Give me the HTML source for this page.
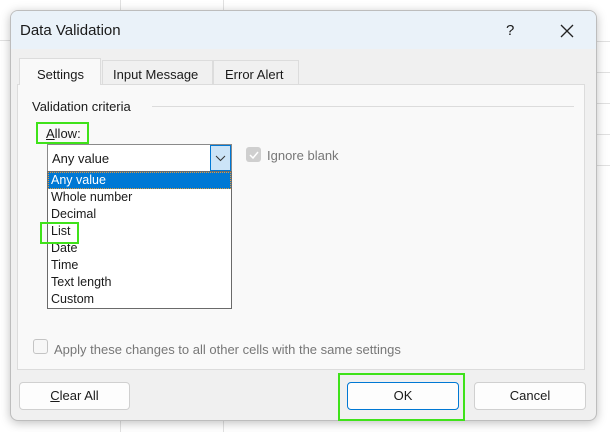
<!DOCTYPE html>
<html><head><style>
*{margin:0;padding:0;box-sizing:border-box}
body{width:610px;height:432px;overflow:hidden;background:#fff;font-family:"Liberation Sans",sans-serif;font-size:12.5px;color:#1a1a1a;position:relative}
.gl{position:absolute;background:#e1e1e1}
.a{position:absolute}
.dlg{position:absolute;left:10px;top:10px;width:587px;height:411px;background:#f0f0f0;border:1px solid #bdbdbd;border-radius:8px;box-shadow:0 2px 10px rgba(0,0,0,.25)}
.title{position:absolute;left:0;top:0;width:100%;height:38px;background:#eaf2f9;border-radius:7px 7px 0 0}
.btn{position:absolute;height:28px;background:#fdfdfd;border:1px solid #d0d0d0;border-radius:4px;text-align:center;line-height:26px;font-size:13px}
.li{position:absolute;left:3px;font-size:12.5px;line-height:17px}
</style></head><body>
<div class="gl" style="left:120px;top:0;width:1px;height:432px"></div>
<div class="gl" style="left:223px;top:0;width:1px;height:432px"></div>
<div class="gl" style="left:0;top:40px;width:10px;height:1px"></div>
<div class="gl" style="left:597px;top:41px;width:13px;height:1px"></div>
<div class="gl" style="left:597px;top:72px;width:13px;height:1px"></div>
<div class="gl" style="left:597px;top:103px;width:13px;height:1px"></div>
<div class="gl" style="left:597px;top:134px;width:13px;height:1px"></div>
<div class="gl" style="left:597px;top:165px;width:13px;height:1px"></div>
<div class="dlg">
 <div class="title"></div>
 <div class="a" style="left:9px;top:11px;font-size:15px">Data Validation</div>
 <div class="a" style="left:495px;top:11px;font-size:15px">?</div>
 <svg class="a" style="left:549px;top:13px" width="14" height="14"><path d="M1 1L13 13M13 1L1 13" stroke="#222" stroke-width="1.3"/></svg>
 <div class="a" style="left:6px;top:73px;width:568px;height:286px;background:#f9f9f9;border:1px solid #dcdcdc"></div>
 <div class="a" style="left:8px;top:47px;width:82px;height:27px;background:#f9f9f9;border:1px solid #dcdcdc;border-bottom:none;padding:8px 0 0 17px;font-size:13px">Settings</div>
 <div class="a" style="left:91px;top:49px;width:111px;height:24px;background:#f0f0f0;border:1px solid #dcdcdc;border-bottom:none;padding:6px 0 0 10px;font-size:13px">Input Message</div>
 <div class="a" style="left:202px;top:49px;width:86px;height:24px;background:#f0f0f0;border:1px solid #dcdcdc;border-bottom:none;padding:6px 0 0 11px;font-size:13px">Error Alert</div>
 <div class="a" style="left:21px;top:88px;font-size:13px">Validation criteria</div>
 <div class="a" style="left:141px;top:95px;width:422px;height:1px;background:#dcdcdc"></div>
 <div class="a" style="left:25px;top:111px;width:53px;height:22px;border:2px solid #3fe21a"></div>
 <div class="a" style="left:35px;top:115px;font-size:13px"><u>A</u>llow:</div>
 <div class="a" style="left:36px;top:133px;width:185px;height:28px;background:#fff;border:1px solid #8a8a8a"></div>
 <div class="a" style="left:41px;top:140px;font-size:13px">Any value</div>
 <div class="a" style="left:199px;top:134px;width:21px;height:26px;background:#cce4f7;border:1px solid #0078d4"></div>
 <svg class="a" style="left:204px;top:144px" width="11" height="7"><path d="M1 1L5.5 5.5L10 1" stroke="#333" fill="none"/></svg>
 <div class="a" style="left:235px;top:136px;width:15px;height:15px;background:#cfcfcf;border-radius:3px"></div>
 <svg class="a" style="left:238px;top:140px" width="10" height="8"><path d="M1 4L4 7L9 1" stroke="#fff" stroke-width="1.5" fill="none"/></svg>
 <div class="a" style="left:256px;top:137px;font-size:13px;color:#777">Ignore blank</div>
 <div class="a" style="left:36px;top:160px;width:185px;height:138px;background:#fff;border:1px solid #6a6a6a">
  <div class="a" style="left:0;top:0;width:183px;height:17px;background:#0078d4;border:1px dotted #e69a3a"></div>
  <div class="li" style="top:0;color:#fff">Any value</div>
  <div class="li" style="top:17px">Whole number</div>
  <div class="li" style="top:34px">Decimal</div>
  <div class="li" style="top:51px">List</div>
  <div class="li" style="top:68px">Date</div>
  <div class="li" style="top:85px">Time</div>
  <div class="li" style="top:102px">Text length</div>
  <div class="li" style="top:119px">Custom</div>
 </div>
 <div class="a" style="left:29px;top:211px;width:39px;height:22px;border:2px solid #3fe21a"></div>
 <div class="a" style="left:22px;top:328px;width:15px;height:15px;border:1px solid #c4c4c4;border-radius:3px;background:#f7f7f7"></div>
 <div class="a" style="left:43px;top:331px;font-size:13px;color:#777">Apply these changes to all other cells with the same settings</div>
 <div class="btn" style="left:8px;top:371px;width:111px"><u>C</u>lear All</div>
 <div class="btn" style="left:336px;top:371px;width:112px;border-color:#0078d4">OK</div>
 <div class="btn" style="left:463px;top:371px;width:112px">Cancel</div>
</div>
<div class="a" style="left:338px;top:373px;width:127px;height:48px;border:2px solid #3fe21a"></div>
</body></html>
